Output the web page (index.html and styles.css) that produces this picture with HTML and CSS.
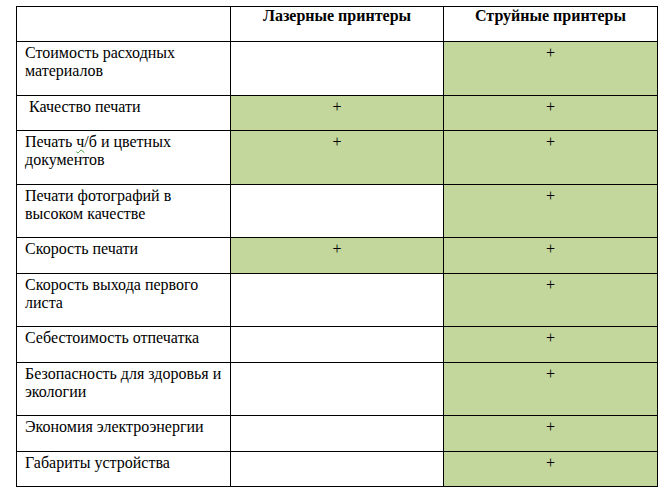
FILE: index.html
```html
<!DOCTYPE html>
<html lang="ru">
<head>
<meta charset="utf-8">
<title>Сравнение принтеров</title>
<link rel="stylesheet" href="styles.css">
</head>
<body>
<table class="cmp">
  <colgroup>
    <col class="c1"><col class="c2"><col class="c3">
  </colgroup>
  <thead>
    <tr class="head">
      <th></th>
      <th>Лазерные принтеры</th>
      <th>Струйные принтеры</th>
    </tr>
  </thead>
  <tbody>
    <tr>
      <td>Стоимость расходных<br>материалов</td>
      <td></td>
      <td class="yes">+</td>
    </tr>
    <tr>
      <td>&nbsp;Качество печати</td>
      <td class="yes">+</td>
      <td class="yes">+</td>
    </tr>
    <tr>
      <td>Печать <span class="spell">ч</span>/б и цветных<br>документов</td>
      <td class="yes">+</td>
      <td class="yes">+</td>
    </tr>
    <tr>
      <td>Печати фотографий в<br>высоком качестве</td>
      <td></td>
      <td class="yes">+</td>
    </tr>
    <tr>
      <td>Скорость печати</td>
      <td class="yes">+</td>
      <td class="yes">+</td>
    </tr>
    <tr>
      <td>Скорость выхода первого<br>листа</td>
      <td></td>
      <td class="yes">+</td>
    </tr>
    <tr>
      <td>Себестоимость отпечатка</td>
      <td></td>
      <td class="yes">+</td>
    </tr>
    <tr>
      <td>Безопасность для здоровья и<br>экологии</td>
      <td></td>
      <td class="yes">+</td>
    </tr>
    <tr>
      <td>Экономия электроэнергии</td>
      <td></td>
      <td class="yes">+</td>
    </tr>
    <tr>
      <td>Габариты устройства</td>
      <td></td>
      <td class="yes">+</td>
    </tr>
  </tbody>
</table>
</body>
</html>
```

FILE: styles.css
```css
html, body {
  margin: 0;
  padding: 0;
  background: #ffffff;
}

body {
  padding: 6px 0 0 16px;
  font-family: "Liberation Serif", "Times New Roman", serif;
  font-size: 16px;
  line-height: 18px;
  color: #000000;
}

.cmp {
  border-collapse: collapse;
  table-layout: fixed;
  width: 641px;
}

.c1 { width: 214px; }
.c2 { width: 213px; }
.c3 { width: 214px; }

.cmp th,
.cmp td {
  border: 1px solid #000000;
  vertical-align: top;
  white-space: nowrap;
}

.cmp th {
  padding: 0 6px 16px;
  font-weight: bold;
  text-align: center;
}

.cmp td {
  padding: 2px 4px 14.5px 8px;
  text-align: left;
}

.cmp td.yes {
  background: #c3d69b;
  text-align: center;
  padding-left: 4px;
  padding-right: 4px;
}

.spell {
  text-decoration: underline wavy #3a9a3a;
  text-decoration-thickness: 1px;
  text-underline-offset: 2px;
}
```
